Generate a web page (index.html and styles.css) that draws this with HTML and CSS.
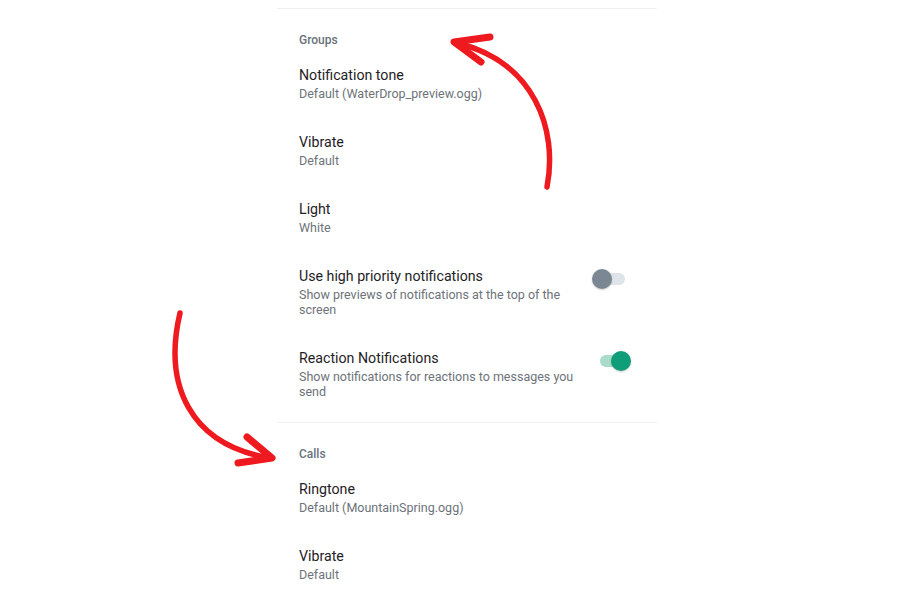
FILE: index.html
```html
<!DOCTYPE html>
<html lang="en">
<head>
    <meta charset="UTF-8">
    <title>Notification settings</title>
    <link rel="stylesheet" href="styles.css">
</head>
<body>
<div class="screen">
    <!-- Groups -->
    <div class="section">
        <div class="section-title">Groups</div>
        <div class="item">
            <div class="item-text">
                <div class="item-title">Notification tone</div>
                <div class="item-sub">Default (WaterDrop_preview.ogg)</div>
            </div>
        </div>
        <div class="item">
            <div class="item-text">
                <div class="item-title">Vibrate</div>
                <div class="item-sub">Default</div>
            </div>
        </div>
        <div class="item">
            <div class="item-text">
                <div class="item-title">Light</div>
                <div class="item-sub">White</div>
            </div>
        </div>
        <div class="item">
            <div class="item-text">
                <div class="item-title">Use high priority notifications</div>
                <div class="item-sub">Show previews of notifications at the top of the screen</div>
            </div>
            <div class="switch"><span class="track"></span><span class="thumb"></span></div>
        </div>
        <div class="item">
            <div class="item-text">
                <div class="item-title">Reaction Notifications</div>
                <div class="item-sub">Show notifications for reactions to messages you send</div>
            </div>
            <div class="switch on"><span class="track"></span><span class="thumb"></span></div>
        </div>
    </div>

    <!-- Calls -->
    <div class="section">
        <div class="section-title">Calls</div>
        <div class="item">
            <div class="item-text">
                <div class="item-title">Ringtone</div>
                <div class="item-sub">Default (MountainSpring.ogg)</div>
            </div>
        </div>
        <div class="item">
            <div class="item-text">
                <div class="item-title">Vibrate</div>
                <div class="item-sub">Default</div>
            </div>
        </div>
    </div>
</div>

<!-- hand drawn arrows -->
<svg class="arrows" width="900" height="600" viewBox="0 0 900 600">
    <g fill="none" stroke="#ee1a1f" stroke-linecap="round" stroke-linejoin="round">
        <path d="M547 187 C 558 130, 535 62, 457 43" stroke-width="5.5"/>
        <path d="M490 37 L454 42 L481 62" stroke-width="7"/>
        <path d="M180 313 C 163 385, 190 445, 270 458" stroke-width="5.5"/>
        <path d="M247 437 L272 458 L238 463" stroke-width="7"/>
    </g>
</svg>
</body>
</html>
```

FILE: styles.css
```css
body {
    margin: 0;
    background-color: #ffffff;
    font-family: Roboto, "Liberation Sans", sans-serif;
}
.screen {
    width: 380px;
    margin-left: 277px;
    padding-top: 8px;
}
.section {
    border-top: 1px solid #f0f0f0;
    margin-bottom: 8px;
}
.section-title {
    padding: 23px 22px 0;
    font-size: 12px;
    line-height: 16px;
    font-weight: 500;
    color: #68727c;
    margin-bottom: 1px;
}
.item {
    display: flex;
    align-items: flex-start;
    gap: 12px;
    padding: 16px 26px 15px 22px;
}
.item-text {
    width: 281px;
}
.item-title {
    font-size: 14.2px;
    line-height: 20px;
    color: #1f2225;
}
.item-sub {
    margin-top: 1px;
    font-size: 12.5px;
    line-height: 15px;
    color: #6d7379;
}
.switch {
    position: relative;
    width: 39px;
    height: 20px;
    margin-top: 3px;
}
.switch .track {
    position: absolute;
    left: 5px;
    right: 6px;
    top: 4px;
    height: 12px;
    border-radius: 6px;
    background-color: #dfe4ea;
}
.switch .thumb {
    position: absolute;
    left: 0;
    top: 0;
    width: 20px;
    height: 20px;
    border-radius: 50%;
    background-color: #7b8894;
    box-shadow: 0 1px 2px rgba(0, 0, 0, 0.2);
}
.switch.on {
    margin-top: 3px;
}
.switch.on .track {
    left: 8px;
    right: 3px;
    background-color: #a9dcc9;
}
.switch.on .thumb {
    left: auto;
    right: 0;
    background-color: #0f9e78;
}
.arrows {
    position: absolute;
    left: 0;
    top: 0;
    pointer-events: none;
}
```
